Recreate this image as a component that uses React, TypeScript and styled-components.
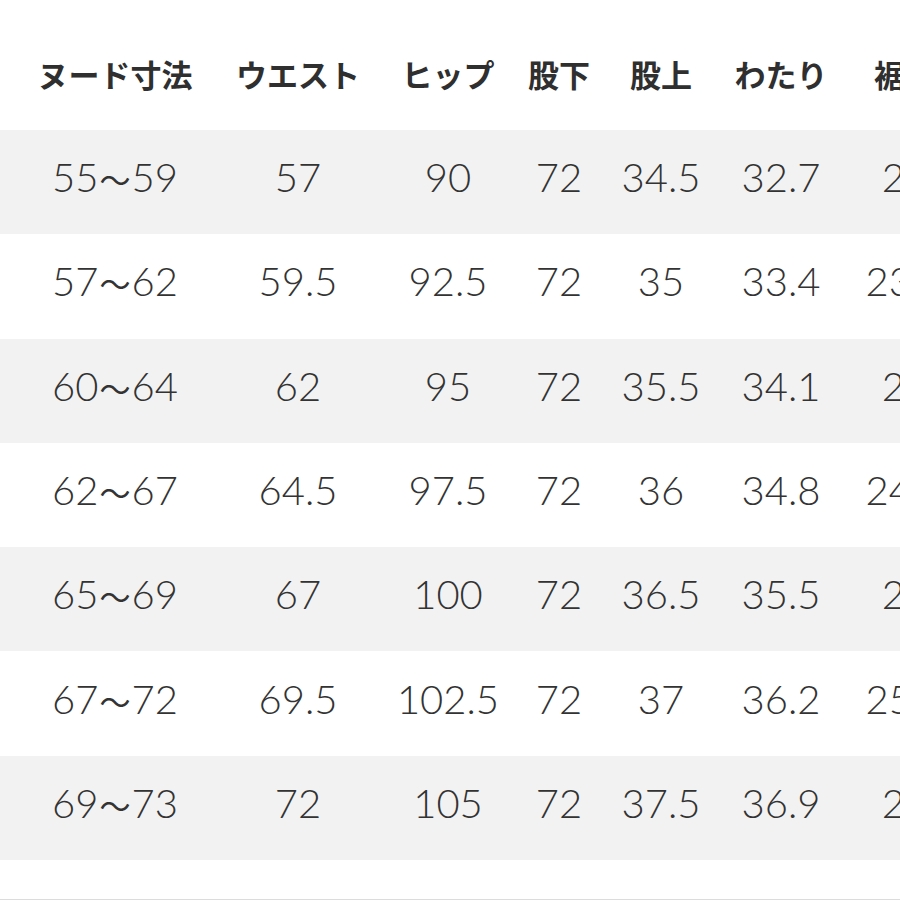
import React from "react";
import styled, { createGlobalStyle } from "styled-components";

const GlobalStyle = createGlobalStyle`
  html, body {
    margin: 0;
    padding: 0;
    background: #ffffff;
  }
  body {
    width: 900px;
    height: 900px;
    overflow: hidden;
  }
`;

const COLS = "200px 166px 134px 88px 116px 124px 124px";

const Page = styled.div`
  width: 900px;
  height: 900px;
  overflow: hidden;
  background: #fff;
  border-bottom: 1px solid #dcdcdc;
  box-sizing: border-box;
`;

const HeaderRow = styled.div`
  display: grid;
  grid-template-columns: ${COLS};
  padding: 16px 0 0 15px;
  height: 130px;
  box-sizing: border-box;
  align-items: center;
`;

const HeadCell = styled.div`
  text-align: center;
  white-space: nowrap;
  font-family: "Noto Sans CJK JP", sans-serif;
  font-weight: 700;
  font-size: 31px;
  color: #2f2f2f;
`;

const Row = styled.div<{ $shade: boolean }>`
  display: grid;
  grid-template-columns: ${COLS};
  padding-left: 15px;
  height: 104.3px;
  align-items: center;
  background: ${(p) => (p.$shade ? "#f2f2f2" : "#ffffff")};
`;

const Cell = styled.div`
  text-align: center;
  white-space: nowrap;
  font-family: "Lato", "Noto Sans", sans-serif;
  font-weight: 300;
  font-size: 40px;
  color: #333;
  padding-bottom: 10px;
`;

const Tilde = styled.span`
  font-family: "Noto Sans CJK JP", sans-serif;
  font-weight: 400;
  font-size: 31px;
  margin: 0 1px;
`;

const heads = ["ヌード寸法", "ウエスト", "ヒップ", "股下", "股上", "わたり", "裾丈"];

const rows = [
  ["55", "59", "57", "90", "72", "34.5", "32.7", "22"],
  ["57", "62", "59.5", "92.5", "72", "35", "33.4", "23.5"],
  ["60", "64", "62", "95", "72", "35.5", "34.1", "24"],
  ["62", "67", "64.5", "97.5", "72", "36", "34.8", "24.5"],
  ["65", "69", "67", "100", "72", "36.5", "35.5", "25"],
  ["67", "72", "69.5", "102.5", "72", "37", "36.2", "25.5"],
  ["69", "73", "72", "105", "72", "37.5", "36.9", "26"],
];

export default function App() {
  return (
    <Page>
      <GlobalStyle />
      <HeaderRow>
        {heads.map((h) => (
          <HeadCell key={h}>{h}</HeadCell>
        ))}
      </HeaderRow>
      {rows.map((r, i) => (
        <Row key={i} $shade={i % 2 === 0}>
          <Cell>
            {r[0]}
            <Tilde>〜</Tilde>
            {r[1]}
          </Cell>
          {r.slice(2).map((v, j) => (
            <Cell key={j}>{v}</Cell>
          ))}
        </Row>
      ))}
    </Page>
  );
}
